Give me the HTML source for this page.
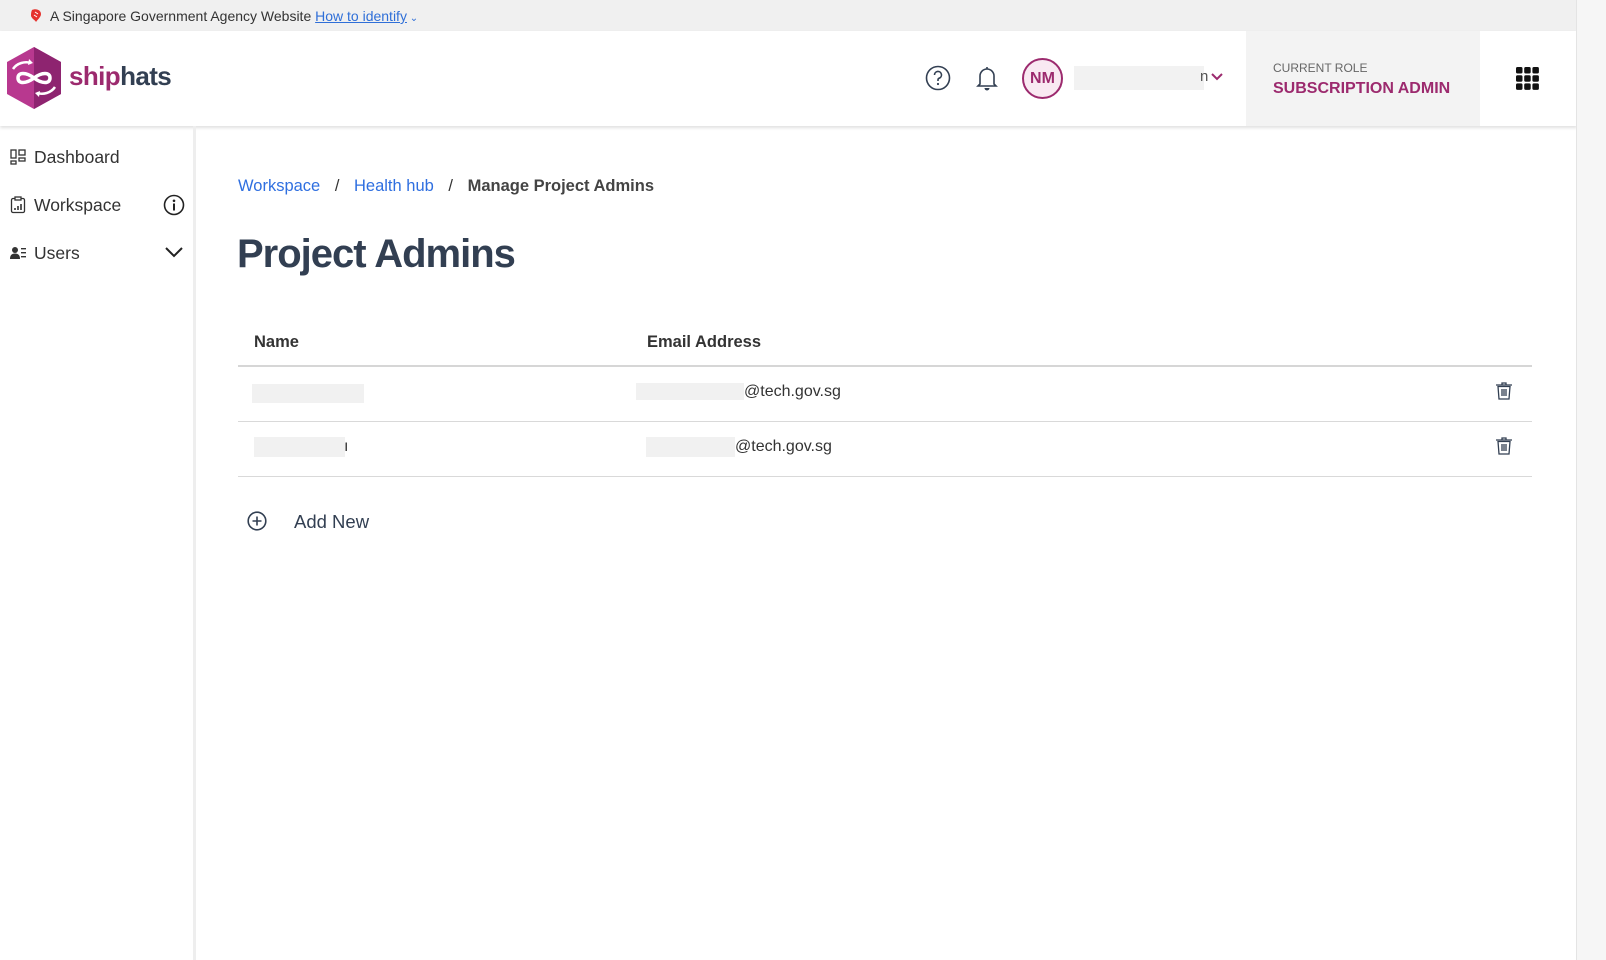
<!DOCTYPE html>
<html><head><meta charset="utf-8"><style>
*{margin:0;padding:0;box-sizing:border-box}
body{width:1606px;height:960px;overflow:hidden;background:#fff;font-family:"Liberation Sans",sans-serif;color:#333;position:relative}
.a{position:absolute;white-space:nowrap}
</style></head><body>
<div class="a" style="left:0;top:0;width:1577px;height:31px;background:#f0f0f0"></div>
<svg class="a" style="left:28px;top:8px" width="16" height="16" viewBox="0 0 16 16"><path d="M4 2c4-2 9 0 9 4 0 3-3 5-5 8-1-2-4-3-5-6 0-2 0-4 1-6z" fill="#e5322d"/><path d="M7 4l3 2M6 7l3 2" stroke="#fff" stroke-width="1"/></svg>
<div class="a" style="left:50px;top:8px;font-size:14px;color:#333">A Singapore Government Agency Website <span style="color:#2f6fd8;text-decoration:underline">How to identify</span><span style="color:#2f6fd8;font-size:10px"> ⌄</span></div>

<div class="a" style="left:0;top:31px;width:1577px;height:95px;background:#fff;box-shadow:0 2px 3px rgba(0,0,0,.12)"></div>
<svg class="a" style="left:5px;top:47px" width="58" height="62" viewBox="0 0 58 62"><path d="M29 0L56 15V47L29 62L2 47V15Z" fill="#b8388f"/><path d="M29 0L56 15V47L29 62Z" fill="#8e2470"/><path d="M13 31c0-6 8-6 16 0s16 6 16 0-8-6-16 0-16 6-16 0z" fill="none" stroke="#fff" stroke-width="3.5"/><path d="M8 22c4-6 12-8 18-6M50 40c-4 6-12 8-18 6" fill="none" stroke="#fff" stroke-width="2.5"/><path d="M24 12l4 4-5 2zM34 50l-4-4 5-2z" fill="#fff"/></svg>
<div class="a" style="left:69px;top:61px;font-size:26px;font-weight:bold;letter-spacing:-0.6px"><span style="color:#9c2a6e">ship</span><span style="color:#323f52">hats</span></div>

<svg class="a" style="left:925px;top:65px" width="26" height="26" viewBox="0 0 26 26"><circle cx="13" cy="13" r="11.5" fill="none" stroke="#323f52" stroke-width="1.6"/><path d="M9.5 10a3.5 3.5 0 1 1 4.5 3.3c-.8.3-1 .9-1 1.7v1" fill="none" stroke="#323f52" stroke-width="1.6"/><circle cx="13" cy="19" r="1.1" fill="#323f52"/></svg>
<svg class="a" style="left:975px;top:64px" width="24" height="28" viewBox="0 0 24 28"><path d="M12 3v2M5 20V12a7 7 0 0 1 14 0v8l2 2H3z" fill="none" stroke="#323f52" stroke-width="1.6"/><path d="M9.5 24a2.5 2.5 0 0 0 5 0z" fill="#323f52"/></svg>
<div class="a" style="left:1022px;top:58px;width:41px;height:41px;border-radius:50%;border:2px solid #9c2a6e;background:#f9e9f2;color:#9c2a6e;font-weight:bold;font-size:16px;text-align:center;line-height:37px">NM</div>
<div class="a" style="left:1074px;top:66px;width:130px;height:24px;background:#f2f2f2"></div>
<div class="a" style="left:1200px;top:68px;font-size:15px;color:#555">n</div>
<svg class="a" style="left:1211px;top:73px" width="12" height="8" viewBox="0 0 12 8"><path d="M1 1l5 5 5-5" fill="none" stroke="#9c2a6e" stroke-width="2"/></svg>
<div class="a" style="left:1246px;top:31px;width:234px;height:95px;background:#f3f3f3"></div>
<div class="a" style="left:1273px;top:61px;font-size:12px;color:#666">CURRENT ROLE</div>
<div class="a" style="left:1273px;top:80px;font-size:16px;font-weight:bold;color:#9c2a6e">SUBSCRIPTION ADMIN</div>
<svg class="a" style="left:1516px;top:67px" width="23" height="23" viewBox="0 0 23 23" fill="#111"><rect x="0" y="0" width="6.5" height="6.5" rx="1.5"/><rect x="8.2" y="0" width="6.5" height="6.5" rx="1.5"/><rect x="16.4" y="0" width="6.5" height="6.5" rx="1.5"/><rect x="0" y="8.2" width="6.5" height="6.5" rx="1.5"/><rect x="8.2" y="8.2" width="6.5" height="6.5" rx="1.5"/><rect x="16.4" y="8.2" width="6.5" height="6.5" rx="1.5"/><rect x="0" y="16.4" width="6.5" height="6.5" rx="1.5"/><rect x="8.2" y="16.4" width="6.5" height="6.5" rx="1.5"/><rect x="16.4" y="16.4" width="6.5" height="6.5" rx="1.5"/></svg>
<div class="a" style="left:1576px;top:0;width:30px;height:960px;background:#f6f6f6;border-left:1px solid #e4e4e4"></div>

<div class="a" style="left:193px;top:126px;width:3px;height:834px;background:#eee"></div>
<svg class="a" style="left:10px;top:149px" width="16" height="16" viewBox="0 0 16 16" fill="none" stroke="#333" stroke-width="1.3"><rect x="1" y="1" width="5" height="8"/><rect x="1" y="12" width="5" height="3"/><rect x="9" y="1" width="6" height="5"/><rect x="9" y="9" width="6" height="3"/></svg>
<div class="a" style="left:34px;top:147px;font-size:17.5px;color:#333">Dashboard</div>
<svg class="a" style="left:10px;top:196px" width="16" height="18" viewBox="0 0 16 18" fill="none" stroke="#333" stroke-width="1.3"><rect x="1.5" y="2.5" width="13" height="14" rx="1.5"/><rect x="5" y="1" width="6" height="3" fill="#fff"/><path d="M5 14v-2M8 14v-4M11 14V8" stroke-width="1.6"/></svg>
<div class="a" style="left:34px;top:195px;font-size:17.5px;color:#333">Workspace</div>
<svg class="a" style="left:163px;top:194px" width="22" height="22" viewBox="0 0 22 22"><circle cx="11" cy="11" r="9.5" fill="none" stroke="#222" stroke-width="1.6"/><circle cx="11" cy="6.8" r="1.3" fill="#222"/><path d="M11 9.5v7" stroke="#222" stroke-width="2"/></svg>
<svg class="a" style="left:10px;top:246px" width="17" height="14" viewBox="0 0 17 14" fill="#333"><circle cx="5" cy="4" r="3"/><path d="M0 13c0-4 2-5.5 5-5.5s5 1.5 5 5.5z"/><rect x="11" y="2" width="5" height="1.4"/><rect x="11" y="6" width="5" height="1.4"/><rect x="11" y="10" width="5" height="1.4"/></svg>
<div class="a" style="left:34px;top:243px;font-size:17.5px;color:#333">Users</div>
<svg class="a" style="left:165px;top:247px" width="18" height="11" viewBox="0 0 18 11"><path d="M1 1l8 8 8-8" fill="none" stroke="#222" stroke-width="2"/></svg>

<div class="a" style="left:238px;top:177px;font-size:16.5px;color:#2f6fe0">Workspace <span style="color:#333;margin:0 10px">/</span> Health hub <span style="color:#333;margin:0 10px">/</span> <b style="color:#444">Manage Project Admins</b></div>
<div class="a" style="left:237px;top:232px;font-size:40px;font-weight:bold;color:#323f52;letter-spacing:-1px">Project Admins</div>

<div class="a" style="left:254px;top:333px;font-size:16.5px;font-weight:bold;color:#333">Name</div>
<div class="a" style="left:647px;top:333px;font-size:16.5px;font-weight:bold;color:#333">Email Address</div>
<div class="a" style="left:238px;top:365px;width:1294px;height:2px;background:#d6d6d6"></div>
<div class="a" style="left:238px;top:421px;width:1294px;height:1px;background:#d9d9d9"></div>
<div class="a" style="left:238px;top:476px;width:1294px;height:1px;background:#d9d9d9"></div>

<div class="a" style="left:252px;top:384px;width:112px;height:19px;background:#f1f1f1"></div>
<div class="a" style="left:636px;top:383px;width:108px;height:17px;background:#f1f1f1"></div>
<div class="a" style="left:744px;top:383px;font-size:16px;color:#333">@tech.gov.sg</div>
<div class="a" style="left:254px;top:437px;width:91px;height:20px;background:#f1f1f1"></div>
<div class="a" style="left:344px;top:438px;font-size:16px;color:#333">ı</div>
<div class="a" style="left:646px;top:437px;width:89px;height:20px;background:#f1f1f1"></div>
<div class="a" style="left:735px;top:438px;font-size:16px;color:#333">@tech.gov.sg</div>

<svg class="a" style="left:1494px;top:381px" width="20" height="20" viewBox="0 0 20 20" fill="none" stroke="#323f52" stroke-width="1.3"><path d="M2 4h16M8 4V2h4v2"/><path d="M4 5.5l1 12.5h10l1-12.5z"/><path d="M8 8v7M10 8v7M12 8v7"/></svg>
<svg class="a" style="left:1494px;top:436px" width="20" height="20" viewBox="0 0 20 20" fill="none" stroke="#323f52" stroke-width="1.3"><path d="M2 4h16M8 4V2h4v2"/><path d="M4 5.5l1 12.5h10l1-12.5z"/><path d="M8 8v7M10 8v7M12 8v7"/></svg>

<svg class="a" style="left:247px;top:511px" width="20" height="20" viewBox="0 0 20 20" fill="none" stroke="#323f52" stroke-width="1.6"><circle cx="10" cy="10" r="8.8"/><path d="M10 5.5v9M5.5 10h9"/></svg>
<div class="a" style="left:294px;top:511px;font-size:18.5px;color:#323f52">Add New</div>
</body></html>
